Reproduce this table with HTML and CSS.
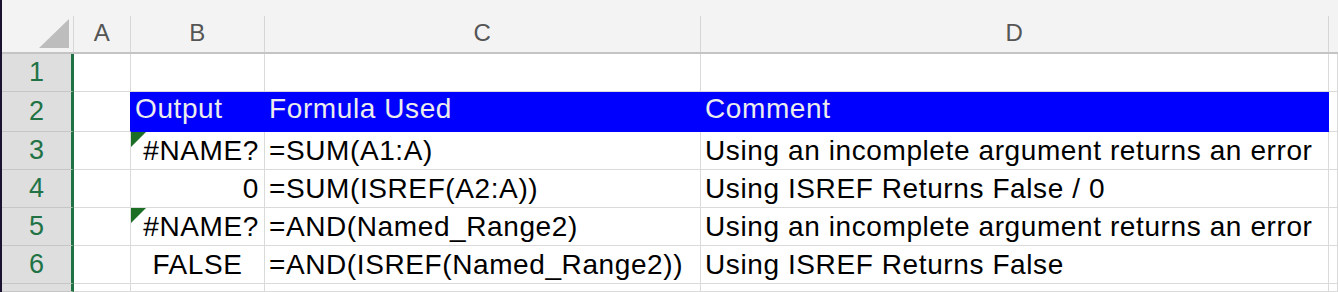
FILE: index.html
```html
<!DOCTYPE html>
<html lang="en">
<head>
<meta charset="utf-8">
<title>Sheet</title>
<link rel="stylesheet" href="styles.css">
</head>
<body>
<div class="app">
  <div class="strip"></div>
  <div class="sheet">
    <div class="colhead">
      <div class="ch corner"><svg class="tri" width="30" height="29" viewBox="0 0 30 29"><polygon points="30,0 30,29 0,29" fill="#bdbdbd"/></svg></div>
      <div class="ch w-a">A</div>
      <div class="ch w-b">B</div>
      <div class="ch w-c">C</div>
      <div class="ch w-d">D</div>
      <div class="ch w-e"></div>
    </div>
    <div class="grid">
      <div class="rh">1</div>
      <div class="c"></div><div class="c"></div><div class="c"></div><div class="c"></div><div class="c"></div>

      <div class="rh rh2">2</div>
      <div class="c to-blue"></div>
      <div class="c hdr">Output</div>
      <div class="c hdr">Formula Used</div>
      <div class="c hdr">Comment</div>
      <div class="c"></div>

      <div class="rh">3</div>
      <div class="c"></div>
      <div class="c r err">#NAME?</div>
      <div class="c">=SUM(A1:A)</div>
      <div class="c">Using an incomplete argument returns an error</div>
      <div class="c"></div>

      <div class="rh">4</div>
      <div class="c"></div>
      <div class="c r">0</div>
      <div class="c">=SUM(ISREF(A2:A))</div>
      <div class="c">Using ISREF Returns False / 0</div>
      <div class="c"></div>

      <div class="rh">5</div>
      <div class="c"></div>
      <div class="c r err">#NAME?</div>
      <div class="c">=AND(Named_Range2)</div>
      <div class="c">Using an incomplete argument returns an error</div>
      <div class="c"></div>

      <div class="rh">6</div>
      <div class="c"></div>
      <div class="c m">FALSE</div>
      <div class="c">=AND(ISREF(Named_Range2))</div>
      <div class="c">Using ISREF Returns False</div>
      <div class="c"></div>

      <div class="rh"></div>
      <div class="c"></div><div class="c"></div><div class="c"></div><div class="c"></div><div class="c"></div>
    </div>
  </div>
</div>
</body>
</html>
```
FILE: styles.css
```css
* { box-sizing: border-box; }
html, body { margin: 0; padding: 0; }
body {
  width: 1338px;
  height: 292px;
  overflow: hidden;
  background: #ffffff;
  font-family: "Liberation Sans", Arial, Helvetica, sans-serif;
}
.app { display: flex; height: 292px; }
.strip { width: 2px; flex: none; background: #1b1230; }
.sheet { flex: 1; display: flex; flex-direction: column; min-width: 0; }

.colhead {
  display: flex;
  height: 54px;
  padding-top: 16px;
  background: #f3f3f3;
  border-bottom: 2px solid #c4c4c4;
  flex: none;
}
.ch {
  flex: none;
  height: 36px;
  border-right: 1px solid #d6d6d6;
  font-size: 24px;
  line-height: 33px;
  text-align: center;
  color: #555555;
  letter-spacing: 0.5px;
}
.corner { width: 72px; padding: 3px 0 0 37px; }
.tri { display: block; }
.w-a { width: 57px; }
.w-b { width: 134px; }
.w-c { width: 436px; }
.w-d { width: 628px; }
.w-e { flex: 1; border-right: none; }

.grid {
  flex: 1;
  display: grid;
  grid-template-columns: 72px 57px 134px 436px 628px 1fr;
  grid-template-rows: 38px 40px 38px 38px 38px 38px 1fr;
  min-height: 0;
}
.rh {
  background: #dedede;
  border-right: 3px solid #1f7244;
  border-bottom: 1px solid #c6c6c6;
  color: #217346;
  font-size: 27px;
  line-height: 37px;
  text-align: center;
  overflow: hidden;
}
.rh2 { line-height: 39px; }
.c {
  border-right: 1px solid #dadada;
  border-bottom: 1px solid #dadada;
  font-size: 28px;
  letter-spacing: 0.6px;
  line-height: 38px;
  padding: 0 4px;
  white-space: nowrap;
  overflow: hidden;
  color: #000000;
}
.r { text-align: right; padding-right: 5px; }
.m { text-align: center; }
.to-blue { border-right-color: #0000ff; }
.hdr {
  background: #0000ff;
  border-color: #0000ff;
  color: #ececec;
  line-height: 33px;
}
.err { position: relative; }
.err::before {
  content: "";
  position: absolute;
  left: 0;
  top: 0;
  width: 0;
  height: 0;
  border-top: 15px solid #1b6e23;
  border-right: 15px solid transparent;
}
```
